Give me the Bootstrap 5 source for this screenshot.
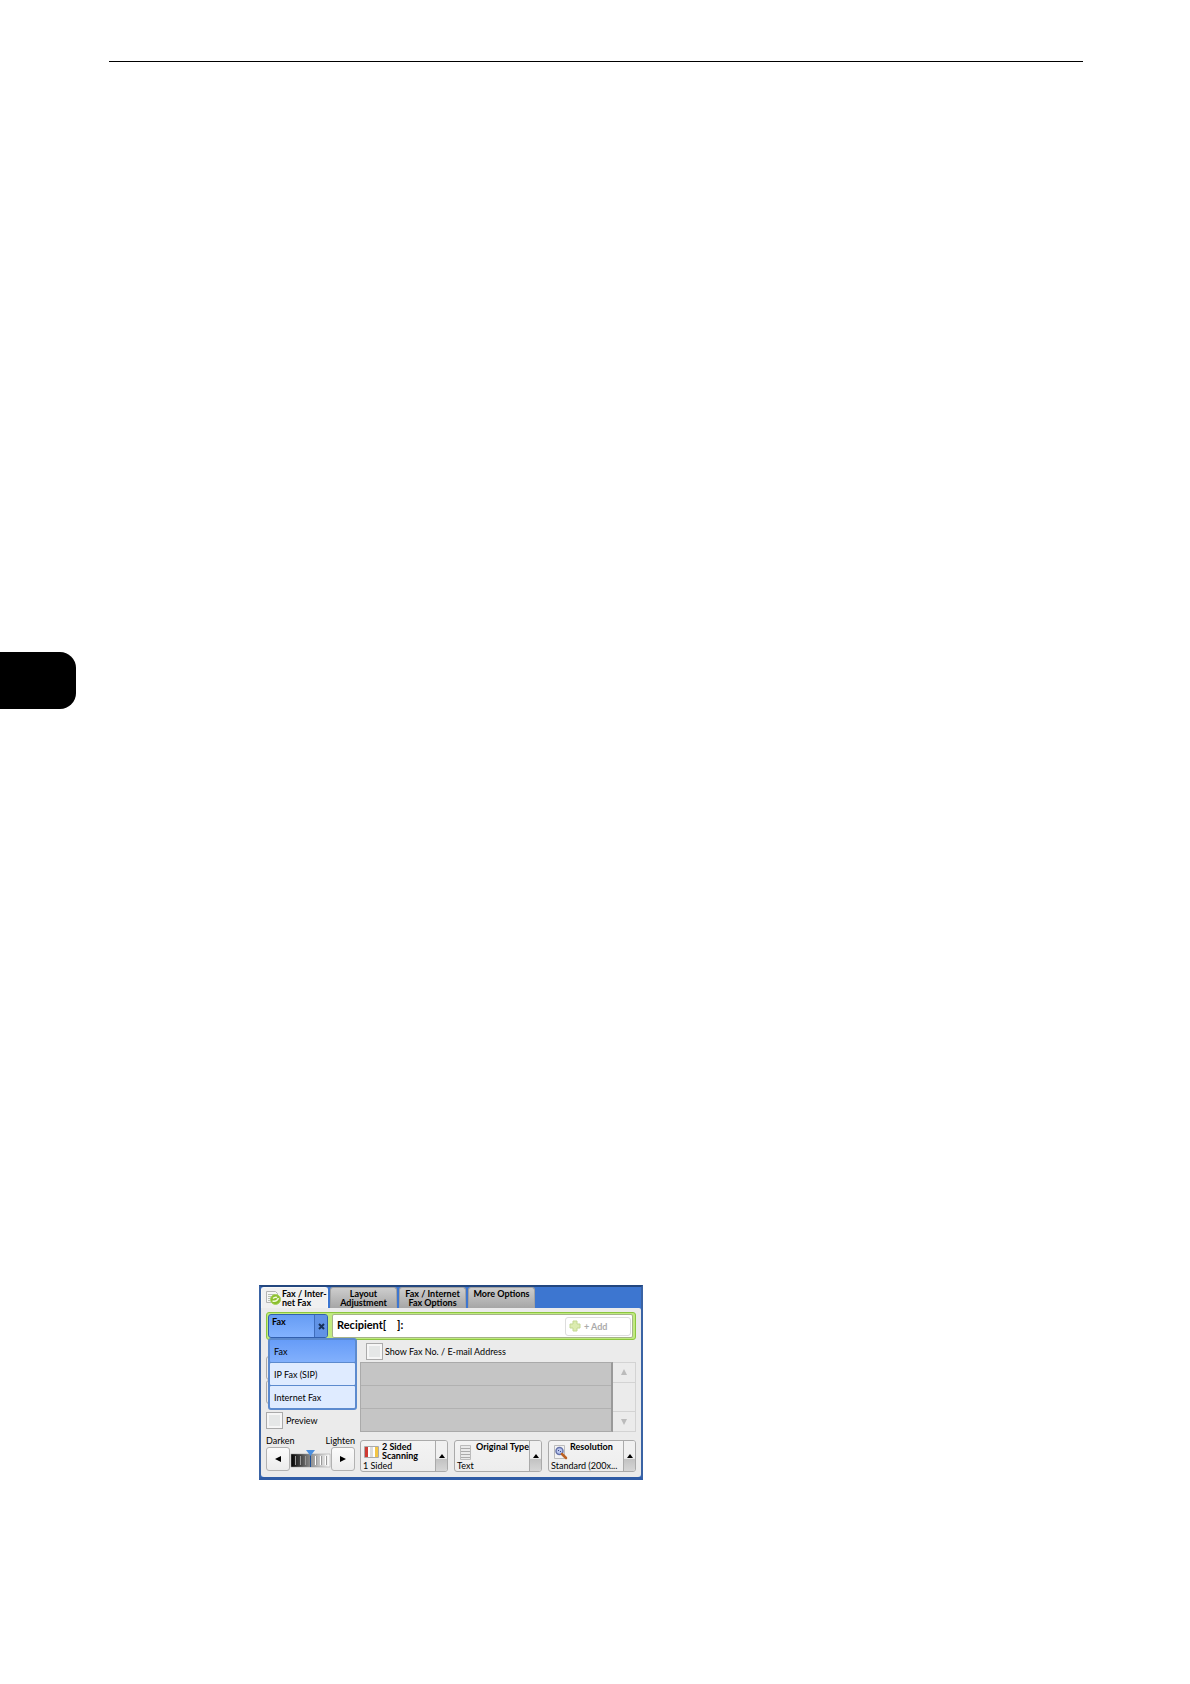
<!DOCTYPE html>
<html lang="en">
<head>
<meta charset="utf-8">
<meta name="viewport" content="width=device-width, initial-scale=1">
<title>Fax / Internet Fax</title>
<link href="https://cdn.jsdelivr.net/npm/bootstrap@5.3.0/dist/css/bootstrap.min.css" rel="stylesheet">
<style>
body{background:#fff;color:#000;font-family:Lato,"Open Sans",sans-serif;font-size:9px;line-height:9px;font-weight:400}
button,input{font:inherit;color:inherit}
.page{min-height:100vh;padding-top:61px}
.page-rule{margin:0 107px 0 109px;border:0;border-top:1px solid #000;opacity:1}
.chapter-tab{width:76px;height:57px;margin-top:590px;background:#000;border-radius:0 16px 16px 0}
.device{max-width:384px;margin:576px 0 0 259px;border:2px solid #3a63a4;border-top-color:#23477f;border-bottom:3px solid #2f5ca6;background:#3d76d0}
.tabs{height:21px;gap:2px}
.tabs .nav-link{width:67px;height:21px;padding:1px 0 0;border:1px solid #a2a2a2;border-bottom:0;border-radius:3px 3px 0 0;background:linear-gradient(#cdcdcd,#a6a6a6);color:#000;font-size:9px;font-weight:700;line-height:9px;text-align:center;white-space:nowrap}
.tabs .nav-link.active{background:#f0f0f0;border-color:#f7f7f7;color:#000;padding-left:4px;gap:1px;text-align:left}
.screen{background:#ebebeb;padding:4px 5px 5px 5px;border-radius:0 2px 3px 3px}
.dest{height:28px;padding:2px;gap:4px;background:#c0ea80;border:1px solid #8cc63e;border-radius:3px}
.kind{width:60px;height:24px;padding:0;border:1px solid #315fae;border-radius:3px;background:linear-gradient(#669cf4,#82b2ff);margin-left:-1px;overflow:hidden}
.kind-name{padding:2px 0 0 3px;text-align:left;font-weight:700}
.kind-x{width:13px;border-left:1px solid #3f6dbb;background:#6193e6}
.menu{top:25px;left:1px;min-width:0;width:89px;padding:1px 0 0;border:2px solid #5c8ace;border-top-width:1px;border-radius:3px;background:#5c8ace;font-size:9px;display:flex;gap:1px;z-index:5}
.menu .dropdown-item{height:22px;padding:0 0 0 4px;background:#dfebff;color:#000;font-weight:400;line-height:21px;border-radius:1px}
.menu .dropdown-item.active{background:linear-gradient(#669cf8,#82b0fc)}
.field{background:#fff;border:1px solid #a5b389;border-radius:2px;height:24px;padding:0 1px 0 4px;font-size:11px;font-weight:700}
.field label{line-height:12px;padding-bottom:2px}
.field input{min-width:0;height:16px;border:0;outline:0;background:transparent;padding:0}
.add{width:66px;height:19px;padding:0 0 0 3px;border:1px solid #ddd;border-radius:3px;background:#fff;color:#aaa;font-size:9px;gap:3px}
.left{width:94px;padding-right:5px}
.ghosts{height:48px;margin-top:16px}
.ghost-btn{width:60px;height:24px;border:1px solid #aaa;border-radius:3px;background:#eee}
.tick{appearance:none;width:17px;height:17px;margin:0;border:1px solid #aaa;border-radius:0;background:#e5e7e7;box-shadow:inset 0 0 0 2px #f6f6f6}
.preview{margin-top:8px;gap:3px}
.ends{height:12px;margin-top:6px;line-height:12px}
.step{width:24px;height:24px;padding:0;border:1px solid #b2b2b2;border-radius:3px;background:linear-gradient(#fbfbfb,#ececec)}
.show{height:17px;margin:3px 0 2px 6px;gap:2px}
.list{height:70px;margin-bottom:8px}
.rows{background:#c5c5c5;border:1px solid #aaa;border-right:2px solid #999}
.rows li+li{border-top:1px solid #b1b1b1}
.scroller{width:23px;border:1px solid #d3d3d3;border-left:0}
.scroller button{border:0;padding:0;background:transparent}
.scroller span{border:1px solid #d3d3d3;border-width:1px 0}
.options{gap:6px}
.opt{height:32px;padding:0;border:1px solid #aaa;border-radius:3px;background:linear-gradient(#f3f3f3,#ededed);min-width:0;overflow:hidden;text-align:left}
.opt-main{padding:1px 0 1px 2px;min-width:0;white-space:nowrap}
.opt-head{height:19px;gap:2px}
.opt-title{font-weight:700}
.opt-up{width:12px;border-left:1px solid #aaa;background:linear-gradient(#f0f0f0 58%,#c2c2c2 60%,#d6d6d6)}
svg{display:block;flex:none}
</style>
<script src="https://cdn.jsdelivr.net/npm/bootstrap@5.3.0/dist/js/bootstrap.bundle.min.js"></script>
</head>
<body>
<main class="page">
<hr class="page-rule">
<div class="chapter-tab"></div>
<section class="device" aria-label="Fax">
  <nav class="tabs nav flex-nowrap">
    <a class="nav-link active d-flex" href="#">
      <svg width="15" height="17" viewBox="0 0 15 17"><path d="M.5 2.500h9l2 2v9H.5z" fill="#f5f5f5" stroke="#b4b4b4"/><path d="M2 5.500h7M2 7.500h5M2 9.500h3M2 11.500h2" stroke="#b9c2b4"/><circle cx="9.500" cy="10.500" r="5" fill="#8abe2c" stroke="#a8d25b"/><path d="M6.500 12q4.500 1 6-3M7 9.500q2-2 4-1" fill="none" stroke="#f2fbdc" stroke-width="1.500"/></svg>
      <span>Fax / Inter-<br>net Fax</span></a>
    <a class="nav-link" href="#">Layout<br>Adjustment</a>
    <a class="nav-link" href="#">Fax / Internet<br>Fax Options</a>
    <a class="nav-link" href="#">More Options</a>
  </nav>
  <div class="screen">
    <div class="dest d-flex align-items-center position-relative">
      <button class="kind d-flex flex-shrink-0" type="button" aria-expanded="true">
        <span class="kind-name flex-grow-1">Fax</span>
        <span class="kind-x h-100 d-flex align-items-center justify-content-center"><svg width="7" height="7" viewBox="0 0 7 7"><path d="M1 1l5 5M6 1L1 6" stroke="#173058" stroke-width="2"/></svg></span>
      </button>
      <div class="field d-flex align-items-center flex-grow-1">
        <label for="recipient">Recipient[&nbsp;&nbsp;&nbsp; ]:</label>
        <input class="flex-grow-1" id="recipient" type="text">
        <button class="add d-flex align-items-center" type="button"><svg width="12" height="12" viewBox="0 0 12 12"><path d="M4 1h4v3h3v4H8v3H4V8H1V4h3z" fill="#dcecb0" stroke="#c3d893"/></svg>+ Add</button>
      </div>
      <div class="menu dropdown-menu flex-column">
        <button class="dropdown-item active" type="button">Fax</button>
        <button class="dropdown-item" type="button">IP Fax (SIP)</button>
        <button class="dropdown-item" type="button">Internet Fax</button>
      </div>
    </div>
    <div class="d-flex">
      <div class="left">
        <div class="ghosts"><div class="ghost-btn"></div><div class="ghost-btn"></div></div>
        <div class="preview d-flex align-items-center"><input class="tick" type="checkbox" id="preview"><label for="preview">Preview</label></div>
        <div class="ends d-flex justify-content-between"><span>Darken</span><span>Lighten</span></div>
        <div class="d-flex align-items-center justify-content-between">
          <button class="step d-flex align-items-center justify-content-center" type="button" aria-label="Darken"><svg width="6" height="6" viewBox="0 0 6 6"><path d="M6 0v6L0 3z"/></svg></button>
          <svg width="41" height="18" viewBox="-1 0 41 18"><defs><linearGradient id="tone"><stop offset="0" stop-color="#000"/><stop offset=".5" stop-color="#8c8c8c"/><stop offset="1" stop-color="#fff"/></linearGradient></defs><rect y="4" width="39" height="13" fill="url(#tone)" stroke="#999" stroke-width=".5"/><path d="M4.500 6v9M9.500 6v9M14.500 6v9" stroke="#999" stroke-width="1"/><path d="M25.500 6v9M30.500 6v9M35.500 6v9" stroke="#999" stroke-width="1"/><path d="M24.500 6v9M29.500 6v9M34.500 6v9" stroke="#fff"/><path d="M19.500 4v13" stroke="#1e4f94"/><path d="M15 0h9l-4.500 6z" fill="#4b8fdf"/></svg>
          <button class="step d-flex align-items-center justify-content-center" type="button" aria-label="Lighten"><svg width="6" height="6" viewBox="0 0 6 6"><path d="M0 0v6l6-3z"/></svg></button>
        </div>
      </div>
      <div class="flex-grow-1">
        <div class="show d-flex align-items-center"><input class="tick" type="checkbox" id="show"><label for="show">Show Fax No. / E-mail Address</label></div>
        <div class="list d-flex">
          <ul class="rows list-unstyled d-flex flex-column flex-grow-1 mb-0"><li class="flex-fill"></li><li class="flex-fill"></li><li class="flex-fill"></li></ul>
          <div class="scroller d-flex flex-column">
            <button class="flex-fill d-flex align-items-center justify-content-center" type="button" aria-label="Up"><svg width="6" height="6" viewBox="0 0 6 6"><path d="M3 0l3 6H0z" fill="#bbb"/></svg></button>
            <span class="flex-fill py-2"></span>
            <button class="flex-fill d-flex align-items-center justify-content-center" type="button" aria-label="Down"><svg width="6" height="6" viewBox="0 0 6 6"><path d="M3 6l3-6H0z" fill="#bbb"/></svg></button>
          </div>
        </div>
        <div class="options row-cols-3 d-flex">
          <button class="opt d-flex flex-fill" type="button">
            <span class="opt-main flex-grow-1"><span class="opt-head d-flex">
              <svg width="17" height="18" viewBox="0 0 17 18"><path d="M1.500 4.500h14v11h-14z" fill="#fff" stroke="#aaa"/><path d="M2 5h3v10H2z" fill="#cf3b34"/><path d="M7 5h3v10H7z" fill="#dcdcdc"/><path d="M12 5h3v10h-3z" fill="#f3c545"/></svg>
              <span class="opt-title">2 Sided<br>Scanning</span></span>
              <span class="d-block">1 Sided</span></span>
            <span class="opt-up d-flex align-items-center justify-content-center"><svg width="6" height="4" viewBox="0 0 6 4"><path d="M3 0l3 4H0z"/></svg></span>
          </button>
          <button class="opt d-flex flex-fill" type="button">
            <span class="opt-main flex-grow-1"><span class="opt-head d-flex">
              <svg width="17" height="18" viewBox="0 0 17 18"><path d="M3.500 3.500h10v14h-10z" fill="#e9e9e9" stroke="#bbb"/><path d="M4 6.500h9M4 9.500h9M4 12.500h9M4 15.500h9" stroke="#aaa"/></svg>
              <span class="opt-title">Original Type</span></span>
              <span class="d-block">Text</span></span>
            <span class="opt-up d-flex align-items-center justify-content-center"><svg width="6" height="4" viewBox="0 0 6 4"><path d="M3 0l3 4H0z"/></svg></span>
          </button>
          <button class="opt d-flex flex-fill" type="button">
            <span class="opt-main flex-grow-1"><span class="opt-head d-flex">
              <svg width="17" height="18" viewBox="0 0 17 18"><path d="M3.500 3.500h10v13h-10z" fill="#f2f2f2" stroke="#bbb"/><circle cx="8.500" cy="9" r="3.500" fill="#b8c6ef" stroke="#6673aa" stroke-width="1.500"/><path d="M7 8h1v1H7zM9 9h1v1H9z" fill="#38468a"/><path d="M11 12l4 4" stroke="#bb6225" stroke-width="2.500" stroke-linecap="round"/></svg>
              <span class="opt-title">Resolution</span></span>
              <span class="d-block">Standard (200x...</span></span>
            <span class="opt-up d-flex align-items-center justify-content-center"><svg width="6" height="4" viewBox="0 0 6 4"><path d="M3 0l3 4H0z"/></svg></span>
          </button>
        </div>
      </div>
    </div>
  </div>
</section>
</main>
</body>
</html>
